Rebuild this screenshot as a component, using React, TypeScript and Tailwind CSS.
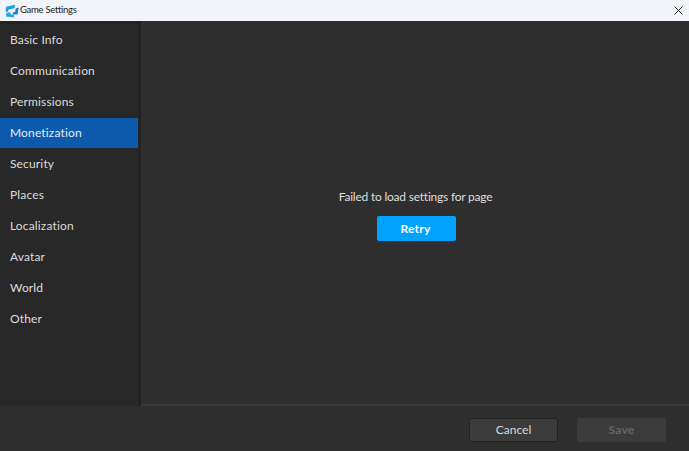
import React from "react";

const tabs = [
    "Basic Info",
    "Communication",
    "Permissions",
    "Monetization",
    "Security",
    "Places",
    "Localization",
    "Avatar",
    "World",
    "Other",
];

export default function App() {
    return (
        <div className="w-[689px] h-[451px] flex flex-col overflow-hidden bg-[#2e2e2e] font-['Lato',sans-serif]">
            {/* TITLE BAR */}
            <div className="h-[21px] shrink-0 flex items-center bg-[#f1f4f9] pl-[5px] pr-[6px]">
                <svg width="14" height="14" viewBox="0 0 14 14" className="shrink-0">
                    <path d="M1 2.8 L10 0.8 L9.6 4 L7 5 L3.4 5.4 L3 8 L0.6 7.4 Z" fill="#1f9fe8" />
                    <path d="M13.6 3.6 L12.6 10.6 L7.4 10.4 L8 8.4 L10.2 7.8 L10.6 4.6 Z" fill="#1a7ed4" />
                    <path d="M1.4 8.8 L5 8.2 L6 10.6 L9.2 11 L8.8 13.6 L1 12.6 Z" fill="#27a6ee" />
                </svg>
                <span className="ml-[1px] text-[9.5px] tracking-[-0.3px] text-[#1c1c1c]">Game Settings</span>
                <svg width="9" height="9" viewBox="0 0 9 9" className="ml-auto" stroke="#222" strokeWidth="1">
                    <path d="M0.5 0.5 L8.5 8.5 M8.5 0.5 L0.5 8.5" />
                </svg>
            </div>

            {/* BODY */}
            <div className="flex-1 flex min-h-0">
                {/* SIDEBAR */}
                <div className="w-[141px] shrink-0 bg-[#282828] border-r-[3px] border-t-[3px] border-[#232323] pt-[1px] flex flex-col">
                    {tabs.map((tab) => (
                        <div
                            key={tab}
                            className={
                                tab === "Monetization"
                                    ? "h-[30px] mb-[1px] flex items-center pl-[10px] text-[12px] tracking-[0.15px] bg-[#0b5aad] text-[#e8ecf2]"
                                    : "h-[30px] mb-[1px] flex items-center pl-[10px] text-[12px] tracking-[0.15px] text-[#dcdcdc]"
                            }
                        >
                            {tab}
                        </div>
                    ))}
                </div>

                {/* CONTENT */}
                <div className="flex-1 flex flex-col items-center border-b-[2px] border-[#383838] pt-[167px] pl-[3px]">
                    <p className="pr-[2px] text-[12px] leading-[17px] tracking-[-0.22px] text-[#dedede]">Failed to load settings for page</p>
                    <button className="mt-[11px] w-[79px] h-[25px] pr-[2px] rounded-[2px] bg-[#00a2ff] text-white text-[12px] font-bold tracking-[0.2px]">
                        Retry
                    </button>
                </div>
            </div>

            {/* FOOTER */}
            <div className="h-[45px] shrink-0 flex justify-end items-start pt-[12px] pr-[23px] gap-[19px] bg-[#2e2e2e]">
                <button className="w-[89px] h-[24px] rounded-[2px] bg-[#3b3b3b] border border-[#222222] text-[12px] text-[#d8d8d8]">
                    Cancel
                </button>
                <button className="w-[89px] h-[24px] rounded-[2px] bg-[#3b3b3b] text-[12px] font-bold tracking-[0.2px] text-[#666666]">
                    Save
                </button>
            </div>
        </div>
    );
}
